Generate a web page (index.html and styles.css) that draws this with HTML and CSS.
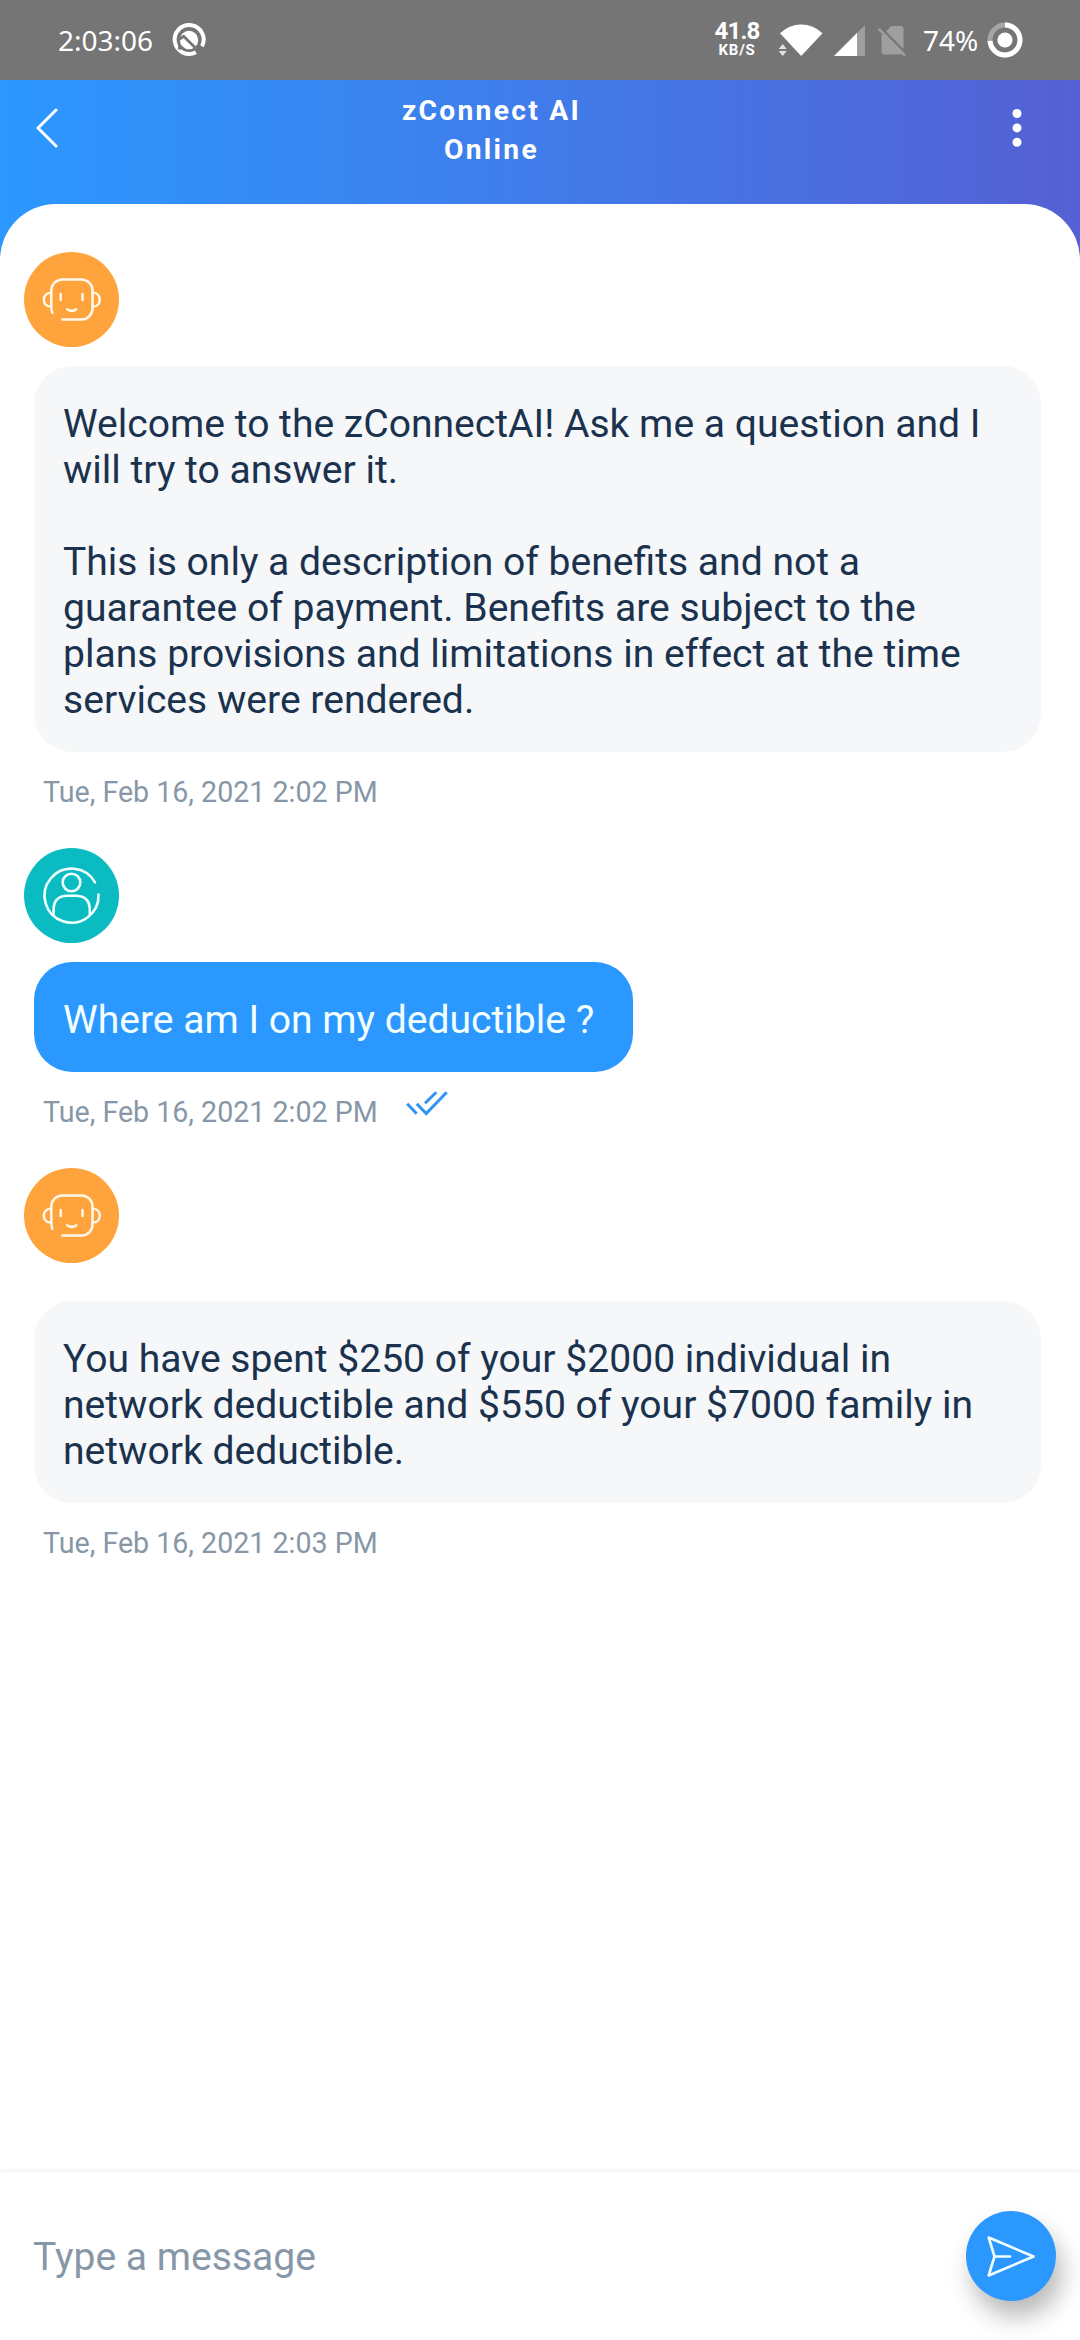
FILE: index.html
```html
<!DOCTYPE html>
<html lang="en">
<head>
<meta charset="utf-8">
<title>zConnect AI</title>
<link rel="stylesheet" href="styles.css">
</head>
<body>
<svg class="defs" width="0" height="0">
  <symbol id="bot" viewBox="0 0 95 95">
    <g fill="none" stroke="#fff8ea" stroke-width="2.5" stroke-linecap="round" stroke-linejoin="round">
      <path d="M28.3 60.8C27.5 59 27.3 57.5 27.3 55V38.500a11 11 0 0 1 11-11H57.500a11 11 0 0 1 11 11V56.500a11 11 0 0 1-11 11H38.300"/>
      <path d="M27 40.800C17.500 40.800 17.500 54.600 27 54.600M69 40.800C78 40.800 78 54.600 69 54.600"/>
      <path d="M36.700 42v6M58.500 42v6"/>
      <path d="M43.200 57.300Q47.700 60.500 52.300 57.300"/>
    </g>
  </symbol>
</svg>
<div class="screen">
  <div class="status">
    <span class="clock">2:03:06</span>
    <svg class="q-icon" width="34" height="34" viewBox="0 0 34 34">
      <path d="M24.300 29.100A14.500 14.500 0 1 1 30.200 22.800" fill="none" stroke="#fff" stroke-width="4" transform="rotate(2 17 17)"/>
      <circle cx="17" cy="17" r="9.200" fill="#fff"/>
      <path d="M7 16.500 11.700 13.200 27 28.500" fill="none" stroke="#757575" stroke-width="2.800"/>
      <path d="M6.500 19.500 13 26.500H6Z" fill="#757575"/>
      <path d="M25 28.500l2.200 2.200" stroke="#757575" stroke-width="2"/>
    </svg>
    <div class="speed"><span class="speed-value">41.8</span><span class="speed-unit">KB/S</span></div>
    <svg class="wifi" width="46" height="34" viewBox="0 0 46 34">
      <path d="M23.200 33 2 10.300Q11 1.500 23.200 1.500T44.500 10.300Z" fill="#fff"/>
      <path d="M-1 19H8.500L12 35H-1Z" fill="#757575"/>
      <path d="m.700 26 4-5 4 5ZM.700 28h8l-4 5Z" fill="#e4e4e4"/>
    </svg>
    <svg class="signal" width="32" height="32" viewBox="0 0 32 32">
      <path d="M31 0V31H0Z" fill="#9f9f9f"/><path d="M23 8V31H0Z" fill="#fff"/>
    </svg>
    <svg class="sim" width="28" height="32" viewBox="0 0 28 32">
      <path d="M8 5.500 12 1.200q1-1.200 2.500-1.200H22.500Q25.500 0 25.500 3V25.500Q25.500 28.500 22.500 28.500H6.500Q3.500 28.500 3.500 25.500V9.500Z" fill="#9f9f9f"/>
      <path d="M2.500 2 28 27.500" stroke="#757575" stroke-width="3"/>
      <path d="M.800 2.800 27 29.500" stroke="#9f9f9f" stroke-width="2.500"/>
    </svg>
    <span class="percent">74%</span>
    <svg class="battery" width="36" height="36" viewBox="0 0 36 36">
      <circle cx="18" cy="18" r="15" fill="none" stroke="#a5a5a5" stroke-width="5"/>
      <path d="M18 3A15 15 0 1 1 3.030 18.900" fill="none" stroke="#fff" stroke-width="5"/>
      <circle cx="18" cy="18" r="7.600" fill="#fff"/>
    </svg>
  </div>
  <header class="header">
    <svg class="back" width="24" height="40" viewBox="0 0 24 40"><path d="M20 2 2 20 20 38" fill="none" stroke="#fff" stroke-width="3" stroke-linecap="round" stroke-linejoin="round"/></svg>
    <h1 class="title">zConnect AI<br>Online</h1>
    <svg class="more" width="10" height="38" viewBox="0 0 10 38"><g fill="#fff"><circle cx="5" cy="4.500" r="4.500"/><circle cx="5" cy="18.900" r="4.500"/><circle cx="5" cy="33.200" r="4.500"/></g></svg>
  </header>
  <main class="chat">
    <section class="message">
      <div class="avatar bot"><svg width="95" height="95"><use href="#bot"/></svg></div>
      <div class="bubble">Welcome to the zConnectAI! Ask me a question and I<br>will try to answer it.<br><br>This is only a description of benefits and not a<br>guarantee of payment. Benefits are subject to the<br>plans provisions and limitations in effect at the time<br>services were rendered.</div>
      <div class="meta"><time>Tue, Feb 16, 2021 2:02 PM</time></div>
    </section>
    <section class="message">
      <div class="avatar user">
        <svg width="95" height="95" viewBox="0 0 95 95"><g fill="none" stroke="#f0ffff" stroke-width="2.600" stroke-linecap="round">
          <path d="M71 34.300A27 27 0 1 0 74.500 46.500"/>
          <circle cx="47.500" cy="34.500" r="8.800"/>
          <path d="M29.600 66V62Q29.600 47.700 43.500 47.700H51.500Q65.800 47.700 65.800 62V66"/>
        </g></svg>
      </div>
      <div class="bubble own">Where am I on my deductible ?</div>
      <div class="meta"><time>Tue, Feb 16, 2021 2:02 PM</time>
        <svg class="checks" width="42" height="25" viewBox="0 0 42 25"><path d="M1.200 12.800 10.700 22.800M10.800 12.800 20.200 22.500 40.700 1.200M19 12.300 30.300 1.200" fill="none" stroke="#3094f5" stroke-width="3"/></svg>
      </div>
    </section>
    <section class="message reply">
      <div class="avatar bot"><svg width="95" height="95"><use href="#bot"/></svg></div>
      <div class="bubble">You have spent $250 of your $2000 individual in<br>network deductible and $550 of your $7000 family in<br>network deductible.</div>
      <div class="meta"><time>Tue, Feb 16, 2021 2:03 PM</time></div>
    </section>
  </main>
  <footer class="composer">
    <span class="placeholder">Type a message</span>
    <div class="send">
      <svg width="90" height="90" viewBox="0 0 90 90"><path d="M22.700 26.500 67.500 45.500 22.700 64.500 28.500 45.500ZM28.500 45.500H44" fill="none" stroke="#f4ffff" stroke-width="2.600" stroke-linecap="round" stroke-linejoin="round"/></svg>
    </div>
  </footer>
</div>
</body>
</html>
```
FILE: styles.css
```css
* { box-sizing: border-box; }
body { margin: 0; font-family: Roboto, "Liberation Sans", sans-serif; background: #fff; }
svg { display: block; flex: none; }
.defs { position: absolute; }
.screen {
  width: 1080px;
  height: 2340px;
  display: flex;
  flex-direction: column;
  overflow: hidden;
  background: linear-gradient(90deg, #2b98ff, #5560d4);
}

.status {
  height: 80px;
  flex: none;
  display: flex;
  align-items: flex-start;
  background: #757575;
  color: #fff;
}
.clock, .percent { font: 28px/38px "Noto Sans", sans-serif; white-space: nowrap; margin-top: 21px; }
.clock { width: 114px; padding-left: 58px; box-sizing: content-box; }
.q-icon { margin-top: 23px; }
.speed { width: 56px; margin: 20px 0 0 503px; display: flex; flex-direction: column; align-items: center; font-weight: 700; }
.speed-value { font-size: 24px; line-height: 22px; letter-spacing: -.8px; }
.speed-unit { font-size: 15px; line-height: 16px; letter-spacing: .8px; }
.wifi { margin: 23px 0 0 13px; }
.signal { margin: 25px 0 0 10px; }
.sim { margin: 26px 0 0 12px; }
.percent { width: 64px; margin-left: 17px; }
.battery { margin: 22px 0 0 0; }

.header {
  height: 124px;
  flex: none;
  display: flex;
  align-items: flex-start;
  color: #fff;
}
.back { margin: 28px 0 0 36px; }
.title {
  margin: 11px 0 0;
  width: 863px;
  text-align: center;
  font-size: 28.200px;
  line-height: 39px;
  font-weight: 700;
  letter-spacing: 2.300px;
}
.more { margin: 29px 0 0 89px; }

.chat {
  flex: 1;
  padding: 48px 0 0 24px;
  border-radius: 56px 56px 0 0;
  background: #fff;
}
.message { margin-bottom: 39px; }
.avatar { width: 95px; height: 95px; border-radius: 50%; margin-bottom: 19px; }
.reply .avatar { margin-bottom: 38px; }
.bot { background: #ffa43d; }
.user { background: #0abcc1; }
.bubble {
  width: 1007px;
  margin-left: 10px;
  padding: 35px 29px 29px;
  border-radius: 38px;
  background: #f5f7f9;
  color: #1b324e;
  font-size: 39.100px;
  line-height: 46px;
  white-space: nowrap;
}
.own { width: 599px; background: #2b98ff; color: #f4ffff; }
.meta {
  height: 34px;
  margin: 23px 0 0 19px;
  display: flex;
  align-items: flex-start;
  color: #8797a8;
  font-size: 28.600px;
  line-height: 34px;
}
.meta time { width: 363px; white-space: nowrap; }
.checks { margin-top: -4px; }

.composer {
  height: 168px;
  flex: none;
  display: flex;
  align-items: flex-start;
  justify-content: space-between;
  padding: 39px 24px 0 33px;
  background: #fff;
  box-shadow: 0 -1px 5px rgba(0, 0, 0, .07);
}
.placeholder { margin-top: 23px; font-size: 39.100px; line-height: 46px; color: #8797a8; }
.send {
  width: 90px;
  height: 90px;
  border-radius: 50%;
  background: #2b98ff;
  box-shadow: 6px 16px 24px rgba(0, 0, 0, .28);
}
```
